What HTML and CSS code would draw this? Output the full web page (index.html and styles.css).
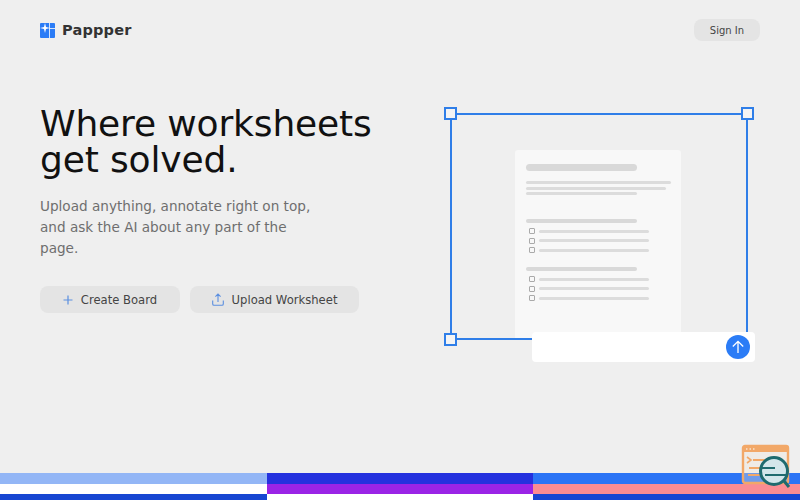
FILE: index.html
```html
<!DOCTYPE html>
<html lang="en">
  <head>
    <meta charset="UTF-8" />
    <meta name="viewport" content="width=device-width, initial-scale=1.0" />
    <link rel="stylesheet" href="styles.css">
    <title>Pappper</title>
  </head>
  <body>
    <div class="page">
      <!-- header -->
      <header class="top-bar">
        <div class="brand">
          <svg class="brand-icon" width="15" height="15" viewBox="0 0 15 15">
            <rect width="15" height="15" rx="1" fill="#2b7cf6" />
            <path d="M5 0 L6 4 L10 5 L6 6 L5 10 L4 6 L0 5 L4 4 Z" fill="#fff" />
            <path d="M9.5 0 V15 M9.5 5.5 H15" stroke="#fff" stroke-width="0.8" fill="none" />
          </svg>
          <span class="brand-name">Pappper</span>
        </div>
        <button class="btn btn-small">Sign In</button>
      </header>

      <!-- hero -->
      <main class="hero">
        <section class="hero-text">
          <h1>Where worksheets<br />get solved.</h1>
          <p class="lead">Upload anything, annotate right on top, and ask the AI about any part of the page.</p>
          <div class="actions">
            <button class="btn btn-create">
              <svg width="10" height="10" viewBox="0 0 10 10">
                <path d="M5 .5 V9.5 M.5 5 H9.5" stroke="#5b8fe0" stroke-width="1.2" fill="none" />
              </svg>
              Create Board
            </button>
            <button class="btn btn-upload">
              <svg width="12" height="13" viewBox="0 0 12 13">
                <path d="M6 9 V1.2 M3.4 3.6 L6 1 L8.6 3.6 M.7 7.5 V11 Q.7 12.3 2 12.3 H10 Q11.3 12.3 11.3 11 V7.5" stroke="#5b8fe0" stroke-width="1.1" fill="none" />
              </svg>
              Upload Worksheet
            </button>
          </div>
        </section>

        <section class="canvas">
          <div class="paper">
            <div class="bar bar-title"></div>
            <div class="lines">
              <div class="line line-full"></div>
              <div class="line line-wide"></div>
              <div class="line line-mid"></div>
            </div>
            <div class="bar bar-head"></div>
            <ul class="checks">
              <li><span class="box"></span><span class="line"></span></li>
              <li><span class="box"></span><span class="line"></span></li>
              <li><span class="box"></span><span class="line"></span></li>
            </ul>
            <div class="bar bar-head"></div>
            <ul class="checks">
              <li><span class="box"></span><span class="line"></span></li>
              <li><span class="box"></span><span class="line"></span></li>
              <li><span class="box"></span><span class="line"></span></li>
            </ul>
          </div>
          <div class="selection">
            <span class="handle handle-tl"></span>
            <span class="handle handle-tr"></span>
            <span class="handle handle-bl"></span>
          </div>
          <div class="ask-bar">
            <span class="send">
              <svg width="14" height="14" viewBox="0 0 14 14">
                <path d="M7 13 V1.5 M1.8 6.5 L7 1.3 L12.2 6.5" stroke="#fff" stroke-width="1.3" fill="none" />
              </svg>
            </span>
          </div>
        </section>
      </main>

      <!-- colour bands -->
      <footer class="bands">
        <div class="band-col">
          <span class="band band-sky"></span>
          <span class="band band-white"></span>
          <span class="band band-navy"></span>
        </div>
        <div class="band-col">
          <span class="band band-indigo"></span>
          <span class="band band-purple"></span>
          <span class="band band-white"></span>
        </div>
        <div class="band-col">
          <span class="band band-blue"></span>
          <span class="band band-coral"></span>
          <span class="band band-navy"></span>
        </div>
      </footer>

      <!-- floating inspector badge -->
      <svg class="badge" width="50" height="46" viewBox="0 0 50 46">
        <rect x="2" y="2" width="45" height="37" rx="2" fill="#f0e4d6" fill-opacity="0.35" stroke="#f2a868" stroke-width="2.4" />
        <rect x="2" y="2" width="45" height="6" fill="#f2a868" />
        <path d="M5 5 H6.5 M8.5 5 H10 M12 5 H13.5" stroke="#fff" stroke-width="1.2" />
        <path d="M6 13 L10 16 L6 19" stroke="#f2a868" stroke-width="1.6" fill="none" />
        <path d="M12 16 H24 M8 24 H22" stroke="#f2a868" stroke-width="2" />
        <path d="M7 31 H22" stroke="#f2a868" stroke-width="2" />
        <circle cx="33" cy="27" r="13.5" fill="#d3e6ea" stroke="#1f6b6e" stroke-width="3" />
        <path d="M43 37 L48 43" stroke="#1f6b6e" stroke-width="3" />
        <path d="M21 24 H34 M24 31 H45" stroke="#1f6b6e" stroke-width="2" />
      </svg>
    </div>
  </body>
</html>
```

FILE: styles.css
```css
* {
  box-sizing: border-box;
}

body {
  margin: 0;
  background-color: #efefef;
  font-family: "DejaVu Sans", sans-serif;
  color: #111;
}

.page {
  position: relative;
  display: flex;
  flex-direction: column;
  width: 800px;
  height: 500px;
  overflow: hidden;
}

.top-bar {
  display: flex;
  justify-content: space-between;
  align-items: center;
  height: 60px;
  padding: 0 40px;
}

.brand {
  display: flex;
  align-items: center;
  gap: 7px;
}

.brand-name {
  font-size: 14.5px;
  font-weight: bold;
  color: #333;
  letter-spacing: 0.2px;
}

.btn {
  display: flex;
  align-items: center;
  justify-content: center;
  border: none;
  border-radius: 8px;
  background-color: #e4e4e4;
  color: #444;
  font-family: inherit;
  cursor: pointer;
}

.btn-small {
  width: 66px;
  height: 22px;
  font-size: 10px;
}

.hero {
  display: flex;
  flex: 1;
  padding-left: 40px;
}

.hero-text {
  width: 400px;
  padding-top: 46px;
}

h1 {
  margin: 0;
  font-size: 36px;
  font-weight: normal;
  line-height: 36px;
  letter-spacing: -0.15px;
  color: #111;
}

.lead {
  width: 280px;
  margin: 18px 0 0;
  font-size: 13.6px;
  line-height: 21px;
  color: #6e6e6e;
}

.actions {
  display: flex;
  gap: 10px;
  margin-top: 27px;
}

.actions .btn {
  gap: 8px;
  height: 27px;
  font-size: 11.6px;
}

.btn-create {
  width: 140px;
}

.btn-upload {
  width: 169px;
}

/* illustration is a free canvas, measured from the top left of .canvas */
.canvas {
  position: relative;
  flex: 1;
}

.paper {
  position: absolute;
  left: 75px;
  top: 90px;
  width: 166px;
  height: 190px;
  padding: 14px 10px 0 11px;
  border-radius: 3px;
  background-color: #f8f8f8;
}

.bar {
  height: 4px;
  border-radius: 2px;
  background-color: #d9d9d9;
}

.bar-title {
  width: 111px;
  height: 7px;
  border-radius: 4px;
}

.bar-head {
  width: 111px;
}

.lines {
  display: flex;
  flex-direction: column;
  gap: 2.5px;
  margin: 10px 0 24px;
}

.line {
  display: block;
  height: 3px;
  border-radius: 2px;
  background-color: #dcdcdc;
}

.line-full {
  width: 145px;
}

.line-wide {
  width: 140px;
}

.line-mid {
  width: 111px;
}

.checks {
  display: flex;
  flex-direction: column;
  gap: 3.5px;
  margin: 5px 0 14px 3px;
  padding: 0;
  list-style: none;
}

.checks li {
  display: flex;
  align-items: center;
  gap: 4px;
}

.checks .box {
  width: 6px;
  height: 6px;
  border: 1px solid #aaa;
  border-radius: 1px;
}

.checks .line {
  width: 110px;
}

.selection {
  position: absolute;
  left: 10px;
  top: 53px;
  width: 298px;
  height: 227px;
  border: 2px solid #2f7ee8;
}

.handle {
  position: absolute;
  width: 13px;
  height: 13px;
  border: 2px solid #2f7ee8;
  background-color: #f4f4f4;
}

.handle-tl {
  left: -8px;
  top: -8px;
}

.handle-tr {
  right: -8px;
  top: -8px;
}

.handle-bl {
  left: -8px;
  bottom: -8px;
}

.ask-bar {
  position: absolute;
  left: 92px;
  top: 272px;
  display: flex;
  justify-content: flex-end;
  align-items: center;
  width: 223px;
  height: 30px;
  padding-right: 5px;
  border-radius: 4px;
  background-color: #fff;
}

.send {
  display: flex;
  justify-content: center;
  align-items: center;
  width: 24px;
  height: 24px;
  border-radius: 50%;
  background-color: #2b7cf6;
}

.bands {
  display: grid;
  grid-template-columns: 267px 266px 267px;
  height: 27px;
}

.band-col {
  display: grid;
  grid-template-rows: 11px 10px 6px;
}

.band-sky {
  background-color: #93b6f6;
}

.band-white {
  background-color: #fff;
}

.band-navy {
  background-color: #1746d2;
}

.band-indigo {
  background-color: #2431de;
}

.band-purple {
  background-color: #9a24e6;
}

.band-blue {
  background-color: #2b74f5;
}

.band-coral {
  background-color: #fb8c92;
}

.badge {
  position: absolute;
  right: 9px;
  top: 444px;
}
```
